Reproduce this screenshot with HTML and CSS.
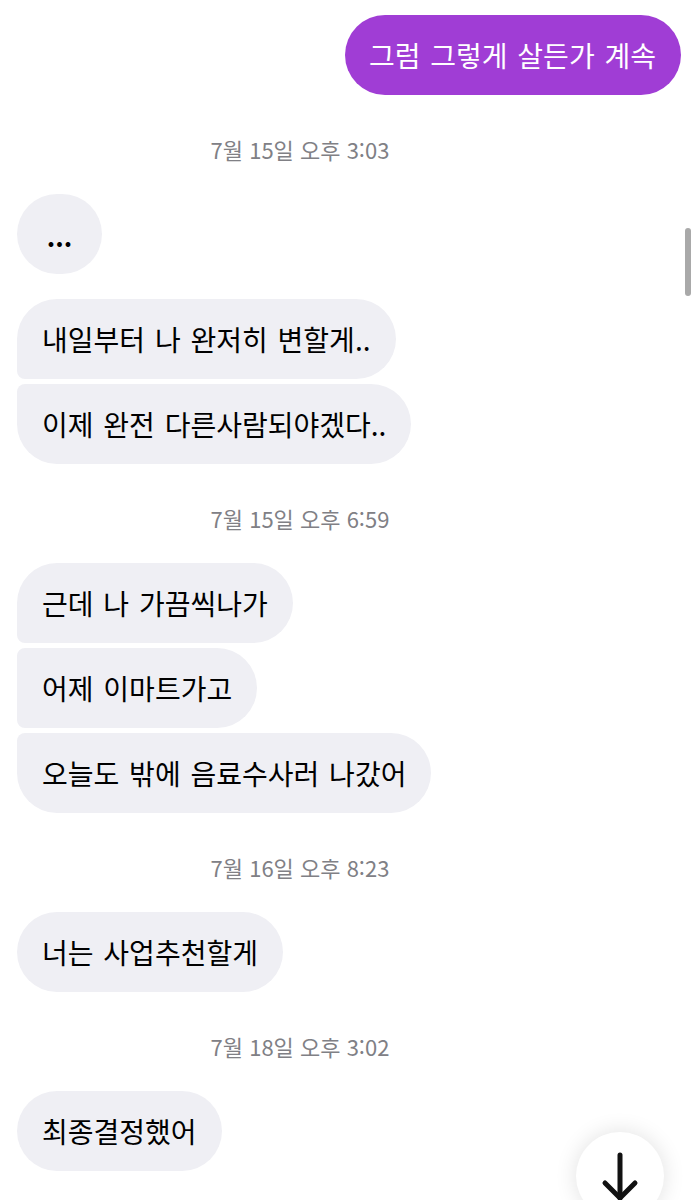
FILE: index.html
```html
<!DOCTYPE html>
<html lang="ko">
<head>
  <meta charset="UTF-8" />
  <meta name="viewport" content="width=device-width, initial-scale=1" />
  <title>메시지</title>
  <link rel="stylesheet" href="styles.css">
</head>
<body>
  <div class="chat">
    <div class="group out">
      <div class="bubble sent">그럼 그렇게 살든가 계속</div>
    </div>

    <div class="time">7월 15일 오후 3:03</div>
    <div class="group">
      <div class="bubble dots">...</div>
    </div>
    <div class="group next">
      <div class="bubble">내일부터 나 완저히 변할게..</div>
      <div class="bubble">이제 완전 다른사람되야겠다..</div>
    </div>

    <div class="time">7월 15일 오후 6:59</div>
    <div class="group">
      <div class="bubble">근데 나 가끔씩나가</div>
      <div class="bubble">어제 이마트가고</div>
      <div class="bubble">오늘도 밖에 음료수사러 나갔어</div>
    </div>

    <div class="time">7월 16일 오후 8:23</div>
    <div class="group">
      <div class="bubble">너는 사업추천할게</div>
    </div>

    <div class="time">7월 18일 오후 3:02</div>
    <div class="group">
      <div class="bubble">최종결정했어</div>
    </div>
  </div>

  <div class="scrollbar"></div>

  <button class="down" type="button" aria-label="맨 아래로">
    <svg width="88" height="88" viewBox="0 0 88 88" fill="none" stroke="#111" stroke-width="5" stroke-linecap="round" stroke-linejoin="round">
      <path d="M44 23 V66" />
      <path d="M29 51 L44 66 L59 51" />
    </svg>
  </button>
</body>
</html>
```

FILE: styles.css
```css
body {
  margin: 0;
  background-color: #fff;
  font-family: "Noto Sans CJK KR", "Noto Sans", sans-serif;
  color: #000;
  height: 1200px;
  overflow: hidden;
}
.chat {
  padding: 15px 16px 0 17px;
}
.group {
  display: flex;
  flex-direction: column;
  align-items: flex-start;
  gap: 5px;
}
.group.next {
  margin-top: 25px;
}
.group.out {
  align-items: flex-end;
}
.bubble {
  height: 80px;
  display: flex;
  align-items: center;
  padding: 0 25px;
  box-sizing: border-box;
  font-size: 28px;
  word-spacing: 2px;
  background-color: #efeff4;
  border-radius: 40px;
  white-space: nowrap;
}
.group .bubble:not(:last-child) {
  border-bottom-left-radius: 8px;
}
.group .bubble:not(:first-child) {
  border-top-left-radius: 8px;
}
.bubble.sent {
  background-color: #a03dd5;
  color: #fff;
  padding: 0 25px 0 24px;
}
.bubble.dots {
  width: 85px;
  justify-content: center;
  padding: 0;
  font-size: 26px;
  font-weight: bold;
  padding-top: 2px;
}
.time {
  margin: 42px 0 33px;
  padding-right: 98px;
  line-height: 24px;
  text-align: center;
  font-size: 22px;
  color: #808085;
}
.scrollbar {
  position: absolute;
  left: 685px;
  top: 228px;
  width: 6px;
  height: 68px;
  border-radius: 3px;
  background-color: #a9a9a9;
}
.down {
  position: absolute;
  left: 576px;
  top: 1132px;
  width: 88px;
  height: 88px;
  padding: 0;
  border: none;
  border-radius: 50%;
  background-color: #fff;
  box-shadow: 0 0 22px rgba(0, 0, 0, 0.12);
  cursor: pointer;
}
.down svg {
  display: block;
}
```
